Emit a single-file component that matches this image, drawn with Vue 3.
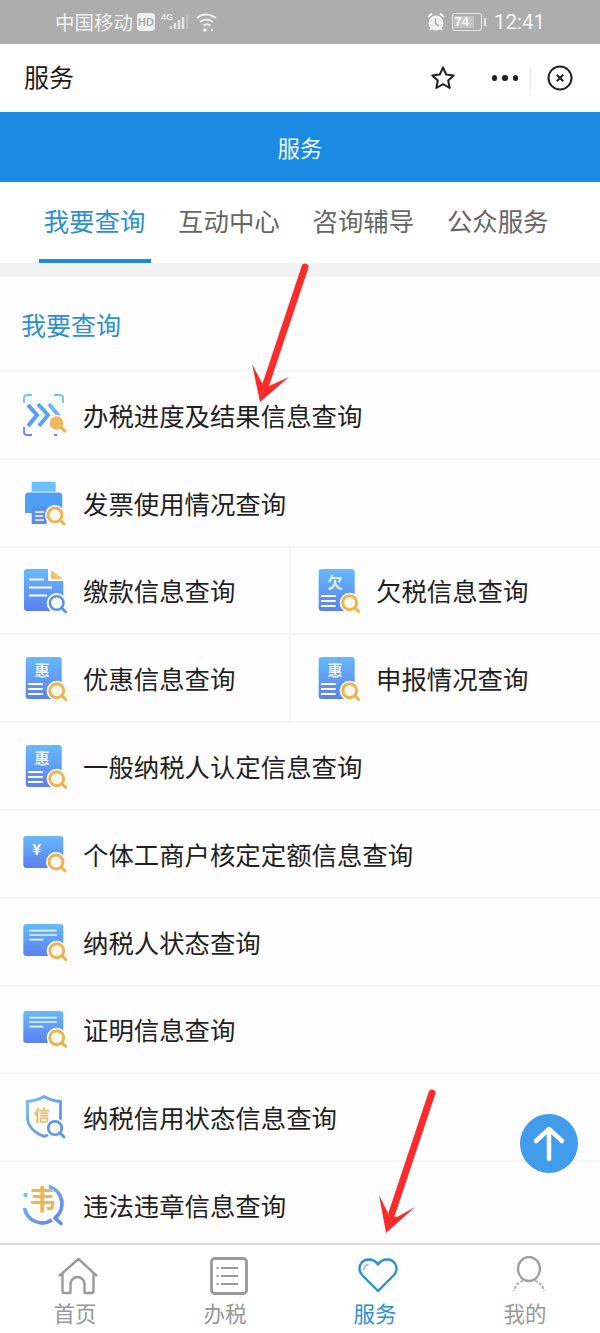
<script setup>
const rows = [
  [{ icon: 'scan', label: '办税进度及结果信息查询' }],
  [{ icon: 'printer', label: '发票使用情况查询' }],
  [{ icon: 'fold', label: '缴款信息查询' }, { icon: 'owe', label: '欠税信息查询' }],
  [{ icon: 'hui', label: '优惠信息查询' }, { icon: 'hui', label: '申报情况查询' }],
  [{ icon: 'hui', label: '一般纳税人认定信息查询' }],
  [{ icon: 'yuan', label: '个体工商户核定定额信息查询' }],
  [{ icon: 'lines', label: '纳税人状态查询' }],
  [{ icon: 'lines', label: '证明信息查询' }],
  [{ icon: 'shield', label: '纳税信用状态信息查询' }],
  [{ icon: 'wei', label: '违法违章信息查询' }],
]

const tabs = ['我要查询', '互动中心', '咨询辅导', '公众服务']
</script>

<template>
  <div class="page">
    <svg class="defs" width="0" height="0" aria-hidden="true">
      <defs>
        <linearGradient id="docFill" x1="0" y1="0" x2="0" y2="1">
          <stop offset="0" stop-color="#66baf9" />
          <stop offset="1" stop-color="#5c80f0" />
        </linearGradient>
        <linearGradient id="lineFill" x1="0" y1="0" x2="1" y2="1">
          <stop offset="0" stop-color="#6cc0f5" />
          <stop offset="1" stop-color="#6a80ee" />
        </linearGradient>
        <symbol id="magOrange" viewBox="0 0 48 48">
          <circle cx="24" cy="24" r="10" fill="#fff" />
          <circle cx="24" cy="24" r="7" fill="#fdf8ee" stroke="#eeb450" stroke-width="3" />
          <path d="M29.500 29.500l3.500 3.300" stroke="#eeb450" stroke-width="3" stroke-linecap="round" />
        </symbol>
        <symbol id="magBlue" viewBox="0 0 48 48">
          <circle cx="24" cy="24" r="10" fill="#fff" />
          <circle cx="24" cy="24" r="6.800" fill="#fff" stroke="#5a93ee" stroke-width="2.600" />
          <path d="M29 29l4 4" stroke="#5a93ee" stroke-width="2.800" stroke-linecap="round" />
        </symbol>

        <symbol id="scan" viewBox="0 0 48 48">
          <path d="M4 12V7a3 3 0 0 1 3-3h5M34 4h6a3 3 0 0 1 3 3v5" fill="none" stroke="#70c3f2" stroke-width="1.800" />
          <path d="M4 36v5a3 3 0 0 0 3 3h5M34 44h3" fill="none" stroke="#6c86ee" stroke-width="1.800" />
          <path d="M8 14l9 10-9 11" fill="none" stroke="#5a9df2" stroke-width="4" />
          <path d="M18 13l10 11-9 11" fill="none" stroke="#5aa5f2" stroke-width="4" />
          <path d="M29 13l9 11-4 5" fill="none" stroke="#6cb8f4" stroke-width="4" />
          <circle cx="36.500" cy="32" r="8" fill="#fff" />
          <circle cx="36.500" cy="32" r="6.800" fill="#f0b660" />
          <path d="M41.500 37l3.500 3" stroke="#eeb04a" stroke-width="3" stroke-linecap="round" />
        </symbol>
        <symbol id="printer" viewBox="0 0 48 48">
          <rect x="11.700" y="2.700" width="24" height="10" fill="#6cc1fb" />
          <path d="M5 17a3.500 3.500 0 0 1 3.500-3.500h30.300a3.500 3.500 0 0 1 3.500 3.500v17H5z" fill="#4f9ff4" />
          <rect x="11.700" y="28" width="15" height="17" fill="#5e8bef" />
          <path d="M15 33h9M15 37h8M15 41h9" stroke="#fff" stroke-width="1.400" />
          <use href="#magOrange" x="11" y="12" width="48" height="48" />
        </symbol>
        <symbol id="fold" viewBox="0 0 48 48">
          <path d="M7 3h21v12h15.300v27a3 3 0 0 1-3 3H7a3 3 0 0 1-3-3V6a3 3 0 0 1 3-3z" fill="url(#docFill)" />
          <path d="M31 4l12 9H31z" fill="#f1c36c" />
          <path d="M9 13.500h15M9 21.500h23M9 29.500h18" stroke="#fff" stroke-width="2.200" />
          <use href="#magBlue" x="12.700" y="13" width="48" height="48" />
        </symbol>
        <symbol id="hui" viewBox="0 0 48 48">
          <rect x="5.700" y="3" width="36" height="42" rx="3" fill="url(#docFill)" />
          <text x="22" y="22" class="icon-text" font-size="15" font-weight="700" fill="#e4f2ff">惠</text>
          <path d="M8 30h14.700M8 35h14.700M8 40h14.700" stroke="#fff" stroke-width="2" />
          <use href="#magOrange" x="12.700" y="12.700" width="48" height="48" />
        </symbol>
        <symbol id="owe" viewBox="0 0 48 48">
          <rect x="5.700" y="3" width="36" height="42" rx="3" fill="url(#docFill)" />
          <text x="22" y="22" class="icon-text" font-size="15" font-weight="700" fill="#e4f2ff">欠</text>
          <path d="M8 30h14.700M8 35h14.700M8 40h14.700" stroke="#fff" stroke-width="2" />
          <use href="#magOrange" x="12.700" y="12.700" width="48" height="48" />
        </symbol>
        <symbol id="yuan" viewBox="0 0 48 48">
          <rect x="3.300" y="6" width="40" height="32" rx="3" fill="url(#docFill)" />
          <text x="16.700" y="25" class="icon-text" font-size="15" font-weight="700" fill="#fff">¥</text>
          <use href="#magOrange" x="12" y="8" width="48" height="48" />
        </symbol>
        <symbol id="lines" viewBox="0 0 48 48">
          <rect x="3.300" y="6" width="40" height="32" rx="3" fill="url(#docFill)" />
          <path d="M9.300 12.700h27.400M9.300 17h27.400M9.300 21.700h14" stroke="#e4f2ff" stroke-width="1.700" />
          <use href="#magOrange" x="12.700" y="8.700" width="48" height="48" />
        </symbol>
        <symbol id="shield" viewBox="0 0 48 48">
          <path d="M24 3.500c5 3 10 4.500 16.500 5v16c0 8-4 14-16.500 19C12 38.500 7.500 32.500 7.500 24.500v-16C14 8 19 6.500 24 3.500z" fill="none" stroke="url(#lineFill)" stroke-width="2.800" />
          <text x="22" y="27.500" class="icon-text" font-size="16" font-weight="700" fill="#edb965">信</text>
          <use href="#magBlue" x="11" y="11" width="48" height="48" />
        </symbol>
        <symbol id="wei" viewBox="0 0 48 48">
          <path d="M29 5.500a18 18 0 0 1 6 31.500M32 39a18 18 0 0 1-27.500-12" fill="none" stroke="url(#lineFill)" stroke-width="3.800" />
          <path d="M35 37l6 5.500" stroke="#5f8cee" stroke-width="3.600" stroke-linecap="round" />
          <rect x="3.500" y="12" width="4" height="4" rx="1" fill="#70c3f2" />
          <text x="22.500" y="29" class="icon-text" font-size="27" font-weight="700" fill="#eeb551">韦</text>
        </symbol>
      </defs>
    </svg>

    <div class="status-bar">
      <span class="carrier">中国移动</span>
      <span class="hd">HD</span>
      <svg class="status-net" width="58" height="22" viewBox="0 0 58 22">
        <text x="0" y="9" class="net-text">4G</text>
        <path d="M10 18v-3M14 18v-6M18 18v-9M22 18V6" stroke="#e4e4e4" stroke-width="2.400" fill="none" />
        <path d="M26 18V3" stroke="#c4c4c4" stroke-width="1.500" />
        <path d="M36 7c5-4.500 12-4.500 19 0M39 11c4-3 9-3 13 0M42.500 14.500c2-1.500 5-1.500 7 0" stroke="#f0f0f0" stroke-width="2" fill="none" />
        <circle cx="44" cy="19" r="1.800" fill="#f0f0f0" />
        <circle cx="51" cy="19" r="1.200" fill="#f0f0f0" />
      </svg>
      <span class="status-space"></span>
      <svg class="alarm" width="20" height="20" viewBox="0 0 20 20">
        <circle cx="10" cy="11" r="7.500" fill="#f2f2f2" />
        <path d="M2 5l4-3.500M18 5l-4-3.500M4 18l2-2M16 18l-2-2" stroke="#f2f2f2" stroke-width="2.200" />
        <path d="M9.500 6.500v5l3.500 2.500" stroke="#adadad" stroke-width="1.600" fill="none" />
      </svg>
      <div class="battery"><span>74</span></div>
      <span class="battery-nub"></span>
      <span class="clock">12:41</span>
    </div>

    <div class="nav-bar">
      <span class="nav-title">服务</span>
      <svg class="nav-star" width="26" height="26" viewBox="0 0 26 26">
        <path d="M13 2.500l3.200 7 7.500.9-5.500 5.100 1.500 7.500-6.700-3.800-6.700 3.800 1.500-7.500-5.500-5.100 7.500-.9z" fill="none" stroke="#222" stroke-width="2" stroke-linejoin="round" />
      </svg>
      <span class="nav-dots"><i></i><i></i><i></i></span>
      <span class="nav-line"></span>
      <svg width="26" height="26" viewBox="0 0 26 26">
        <circle cx="13" cy="13" r="11.500" fill="none" stroke="#222" stroke-width="2" />
        <path d="M9.800 9.800l6.400 6.400M16.200 9.800l-6.400 6.400" stroke="#222" stroke-width="2" />
      </svg>
    </div>

    <div class="header">服务</div>

    <div class="tabs">
      <div v-for="(tab, i) in tabs" :key="tab" class="tab" :class="{ active: i === 0 }">{{ tab }}</div>
    </div>
    <div class="strip"></div>

    <div class="content">
      <div class="section-title">我要查询</div>
      <div v-for="(row, i) in rows" :key="i" class="row">
        <div v-for="item in row" :key="item.label" class="cell">
          <svg class="cell-icon" width="48" height="48"><use :href="'#' + item.icon" width="48" height="48" /></svg>
          <span>{{ item.label }}</span>
        </div>
      </div>
    </div>

    <div class="tab-bar">
      <div class="bar-item">
        <svg width="44" height="40" viewBox="0 0 44 40">
          <path d="M5 20L24.500 3 43 20M8.500 18v17a2 2 0 0 0 2 2h6V28a7 7 0 0 1 14 0v9h7a2 2 0 0 0 2-2V18" transform="translate(-2 0)" fill="none" stroke="#9a9a9a" stroke-width="2.400" stroke-linejoin="round" />
        </svg>
        <span>首页</span>
      </div>
      <div class="bar-item">
        <svg width="44" height="40" viewBox="0 0 44 40">
          <rect x="5.500" y="2.500" width="35" height="35" rx="3" fill="none" stroke="#9a9a9a" stroke-width="2.800" />
          <path d="M15 12h17M15 20h17M15 28h17M10.500 12h2M10.500 20h2M10.500 28h2" stroke="#9a9a9a" stroke-width="2" />
        </svg>
        <span>办税</span>
      </div>
      <div class="bar-item active">
        <svg width="44" height="40" viewBox="0 0 44 40">
          <path d="M22 35L6 19C0 11 6 3.500 13 3.500c4 0 7 2 9 5 2-3 5-5 9-5 7 0 13 7.500 7 15.500z" fill="none" stroke="#2a90d6" stroke-width="2.400" stroke-linejoin="round" />
          <path d="M8 14c0-3 2-5 4.500-5.500" fill="none" stroke="#7dbde8" stroke-width="1.400" />
        </svg>
        <span>服务</span>
      </div>
      <div class="bar-item">
        <svg width="44" height="40" viewBox="0 0 44 40">
          <ellipse cx="23" cy="13" rx="11" ry="12" fill="none" stroke="#a0a0a0" stroke-width="2.400" />
          <path d="M17 25c-5 1-8 5-9 10M29 25c5 1 8 5 9 10" fill="none" stroke="#b4b4b4" stroke-width="2.200" stroke-dasharray="3 1.500" />
        </svg>
        <span>我的</span>
      </div>
    </div>

    <div class="to-top">
      <svg width="40" height="40" viewBox="0 0 40 40">
        <path d="M20 35V6M7 17L20 5l13 12" fill="none" stroke="#fff" stroke-width="4.500" stroke-linecap="round" stroke-linejoin="round" />
      </svg>
    </div>

    <svg class="arrows" width="600" height="1333" viewBox="0 0 600 1333">
      <path d="M305 267L266 384" stroke="#fb2b2b" stroke-width="7" stroke-linecap="round" />
      <path d="M260 402L252 364 262 383 269 386 289 377z" fill="#fb2b2b" />
      <path d="M432 1093L392 1213" stroke="#fb2b2b" stroke-width="7" stroke-linecap="round" />
      <path d="M386 1233L379 1195 389 1215 397 1217 415 1207z" fill="#fb2b2b" />
    </svg>
  </div>
</template>

<style scoped>
.page {
  position: relative;
  display: flex;
  flex-direction: column;
  width: 600px;
  height: 1333px;
  overflow: hidden;
  background: #fff;
  font-family: "Noto Sans CJK SC", "Noto Sans", sans-serif;
  color: #222;
}

.defs {
  position: absolute;
}

.icon-text {
  text-anchor: middle;
  font-family: "Noto Sans CJK SC", sans-serif;
}

.status-bar {
  display: flex;
  align-items: center;
  flex: none;
  height: 44px;
  padding: 0 55px 0 55px;
  background: #adadad;
  color: #f0f0f0;
  box-sizing: border-box;
}

.carrier {
  font-size: 19.500px;
  line-height: 44px;
  width: 82px;
}

.hd {
  width: 18px;
  height: 18px;
  border-radius: 4px;
  background: #efefef;
  color: #adadad;
  font-size: 11px;
  font-weight: 700;
  line-height: 18px;
  text-align: center;
  font-family: "Liberation Sans", sans-serif;
}

.status-net {
  margin-left: 6px;
}

.net-text {
  font-size: 9px;
  font-weight: 700;
  fill: #e8e8e8;
  font-family: "Liberation Sans", sans-serif;
}

.status-space {
  flex: 1;
}

.alarm {
  margin-right: 6px;
}

.battery {
  width: 30px;
  height: 18px;
  box-sizing: border-box;
  border: 1.500px solid #e6e6e6;
  border-radius: 3px;
  padding: 1.500px;
}

.battery span {
  display: block;
  width: 20px;
  height: 12px;
  background: #c6c6c6;
  color: #f2f2f2;
  font-size: 13px;
  font-weight: 700;
  line-height: 12px;
  font-family: "Liberation Sans", sans-serif;
}

.battery-nub {
  width: 2px;
  height: 8px;
  margin-left: 2px;
  background: #e6e6e6;
}

.clock {
  margin-left: 8px;
  font-size: 20.500px;
  font-family: "Roboto", "Liberation Sans", sans-serif;
  color: #f4f4f4;
}

.nav-bar {
  display: flex;
  align-items: center;
  flex: none;
  height: 68px;
  padding: 0 27px 0 24px;
  box-sizing: border-box;
  background: #fff;
}

.nav-title {
  flex: 1;
  padding-bottom: 4px;
  font-size: 25px;
  color: #1c1c1c;
}

.nav-dots {
  display: flex;
  gap: 5px;
  margin-left: 36px;
}

.nav-dots i {
  width: 5.500px;
  height: 5.500px;
  border-radius: 50%;
  background: #222;
}

.nav-line {
  width: 1px;
  height: 23px;
  margin: 0 16px 0 12px;
  background: #e6e6e6;
}

.header {
  flex: none;
  height: 70px;
  background: #1a8ae2;
  color: #f0f7fd;
  font-size: 22.500px;
  line-height: 70px;
  text-align: center;
}

.tabs {
  display: flex;
  flex: none;
  gap: 22.400px;
  height: 81px;
  padding-left: 39px;
  box-sizing: border-box;
  background: #fff;
}

.tab {
  width: 112px;
  padding-right: 1px;
  box-sizing: border-box;
  font-size: 25.400px;
  line-height: 77px;
  text-align: center;
  color: #666;
}

.tab.active {
  color: #2b8fd4;
  border-bottom: 4px solid #1a8ae2;
}

.strip {
  flex: none;
  height: 14px;
  background: #f2f2f2;
}

.content {
  flex: 1;
  min-height: 0;
  overflow: hidden;
  background: #fdfdfd;
}

.section-title {
  height: 95px;
  padding-left: 21px;
  box-sizing: border-box;
  border-bottom: 2px solid #f7f7f7;
  color: #2b8fd4;
  font-size: 25px;
  line-height: 94px;
}

.row {
  display: flex;
  height: 87.800px;
  box-sizing: border-box;
  border-bottom: 2px solid #f5f5f5;
}

.cell {
  display: flex;
  align-items: center;
  gap: 15px;
  flex: 1;
  padding-left: 20px;
  font-size: 25.400px;
  color: #1f1f1f;
}

.cell:first-child:not(:last-child) {
  flex: none;
  width: 291px;
  box-sizing: border-box;
  border-right: 2px solid #f5f5f5;
}

.cell + .cell {
  padding-left: 22px;
}

.cell-icon {
  flex: none;
}

.tab-bar {
  display: flex;
  flex: none;
  height: 90px;
  box-sizing: border-box;
  border-top: 2px solid #dcdcdc;
  background: #fff;
}

.bar-item {
  display: flex;
  flex: 1;
  flex-direction: column;
  align-items: center;
  padding-top: 11px;
  color: #999;
  font-size: 21.500px;
  line-height: 30px;
}

.bar-item svg {
  flex: none;
  margin-bottom: 2px;
  margin-left: 5px;
}

.bar-item.active {
  color: #2a90d6;
}

.to-top {
  position: absolute;
  left: 520px;
  top: 1114px;
  display: flex;
  align-items: center;
  justify-content: center;
  width: 58px;
  height: 59px;
  border-radius: 50%;
  background: #419cec;
}

.arrows {
  position: absolute;
  left: 0;
  top: 0;
  pointer-events: none;
}
</style>
